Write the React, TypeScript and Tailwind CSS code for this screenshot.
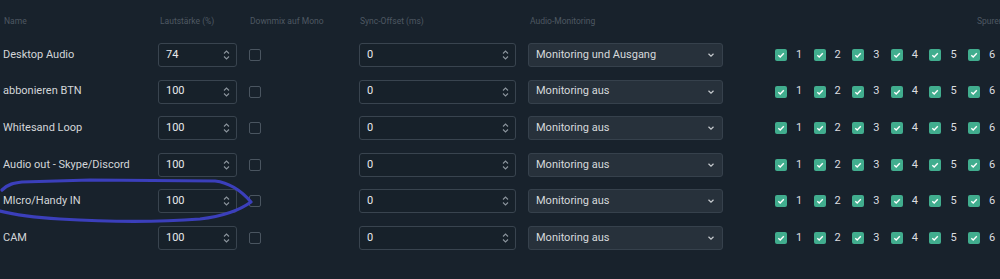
import React from "react";

type Row = { name: string; volume: string; monitoring: string };

const rows: Row[] = [
  { name: "Desktop Audio", volume: "74", monitoring: "Monitoring und Ausgang" },
  { name: "abbonieren BTN", volume: "100", monitoring: "Monitoring aus" },
  { name: "Whitesand Loop", volume: "100", monitoring: "Monitoring aus" },
  { name: "Audio out - Skype/Discord", volume: "100", monitoring: "Monitoring aus" },
  { name: "MIcro/Handy IN", volume: "100", monitoring: "Monitoring aus" },
  { name: "CAM", volume: "100", monitoring: "Monitoring aus" },
];

const Spinner = () => (
  <svg width="7" height="12" viewBox="0 0 7 12" className="shrink-0">
    <path d="M1 4.5 L3.5 2 L6 4.5" fill="none" stroke="#8b949c" strokeWidth="1.1" />
    <path d="M1 7.5 L3.5 10 L6 7.5" fill="none" stroke="#8b949c" strokeWidth="1.1" />
  </svg>
);

const NumberBox = ({ value, width }: { value: string; width: string }) => (
  <div
    className={`${width} shrink-0 h-[24px] flex items-center justify-between pl-[7px] pr-[6px] rounded-[3px] border border-[#39444f] bg-[#17212a] text-[#e8eaec]`}
  >
    <span>{value}</span>
    <Spinner />
  </div>
);

const TrackBox = ({ n }: { n: number }) => (
  <div className="w-[38.6px] flex items-center shrink-0">
    <div className="w-[12px] h-[12px] shrink-0 rounded-[2px] bg-[#41ad8e] flex items-center justify-center">
      <svg width="8" height="8" viewBox="0 0 8 8">
        <path d="M1.3 4.2 L3.2 6 L6.8 2.2" fill="none" stroke="#ffffff" strokeWidth="1.4" />
      </svg>
    </div>
    <span className="ml-[9px] text-[#dcdee0]">{n}</span>
  </div>
);

export default function App() {
  return (
    <div
      className="relative w-[1000px] h-[279px] overflow-hidden bg-[#18222c] text-[11px]"
      style={{ fontFamily: "Roboto, 'Liberation Sans', sans-serif" }}
    >
      {/* header */}
      <div className="flex items-center h-[14px] mt-[14px] text-[8.5px] text-[#4e5862] whitespace-nowrap">
        <div className="w-[160px] shrink-0 pl-[4px]">Name</div>
        <div className="w-[90px] shrink-0">Lautstärke (%)</div>
        <div className="w-[110px] shrink-0">Downmix auf Mono</div>
        <div className="w-[170px] shrink-0">Sync-Offset (ms)</div>
        <div className="w-[447px] shrink-0">Audio-Monitoring</div>
        <div className="shrink-0">Spuren</div>
      </div>

      {/* rows */}
      <div className="mt-[8.7px] flex flex-col">
        {rows.map((r) => (
          <div key={r.name} className="h-[36.6px] flex items-center whitespace-nowrap">
            <div className="w-[158px] shrink-0 pl-[3px] text-[#d3d6d9]">{r.name}</div>
            <NumberBox value={r.volume} width="w-[79px]" />
            <div className="ml-[12px] w-[12px] h-[12px] shrink-0 rounded-[2px] border border-[#4a5560]" />
            <div className="ml-[98px] shrink-0">
              <NumberBox value="0" width="w-[157px]" />
            </div>
            <div className="ml-[12px] w-[195px] shrink-0 h-[24px] flex items-center justify-between pl-[7px] pr-[7px] rounded-[3px] border border-[#36414c] bg-[#27313b] text-[#d6d9dc]">
              <span>{r.monitoring}</span>
              <svg width="8" height="6" viewBox="0 0 8 6">
                <path d="M1.5 1.8 L4 4.2 L6.5 1.8" fill="none" stroke="#c7cbcf" strokeWidth="1.2" />
              </svg>
            </div>
            <div className="ml-[52px] flex shrink-0">
              {[1, 2, 3, 4, 5, 6].map((n) => (
                <TrackBox key={n} n={n} />
              ))}
            </div>
          </div>
        ))}
      </div>

      {/* hand-drawn annotation */}
      <svg className="absolute left-0 top-0 pointer-events-none" width="1000" height="279">
        <path
          d="M2 190 C8 184 14 183 22 182 L90 180 L215 181 C232 183 245 195 251 202 C240 210 225 216 200 219 C160 222 110 222 60 219 C30 217 12 214 0 211"
          fill="none"
          stroke="#3b3fbb"
          strokeWidth="3.2"
          strokeLinecap="round"
          strokeLinejoin="round"
        />
      </svg>
    </div>
  );
}
